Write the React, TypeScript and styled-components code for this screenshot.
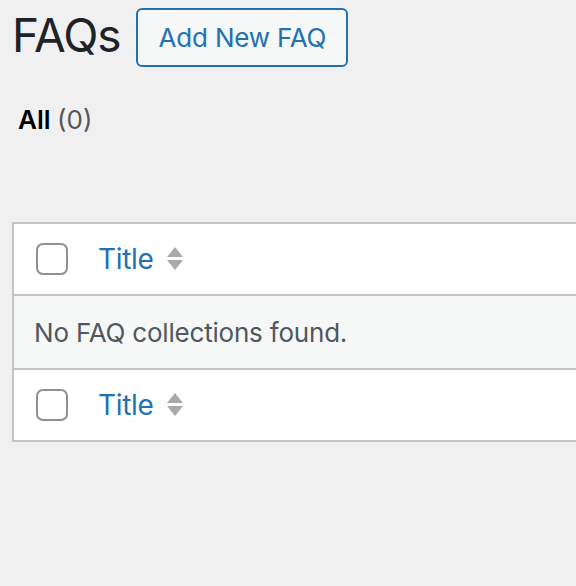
import React from 'react';
import styled, { createGlobalStyle } from 'styled-components';

const GlobalStyle = createGlobalStyle`
    html, body {
        margin: 0;
        padding: 0;
        background: #f0f0f1;
        overflow: hidden;
    }
    body {
        font-family: Inter, "Liberation Sans", sans-serif;
        color: #3c434a;
    }
`;

const Wrap = styled.div`
    padding: 8px 0 0 12px;
`;

const HeaderBar = styled.div`
    display: flex;
    align-items: flex-start;
    height: 59px;
`;

const Heading = styled.h1`
    margin: 4px 15px 0 0;
    font-size: 46px;
    font-weight: 400;
    line-height: 1;
    letter-spacing: -1px;
    color: #1d2327;
`;

const AddButton = styled.a`
    display: inline-flex;
    align-items: center;
    box-sizing: border-box;
    height: 59px;
    padding: 0 20px 0 21px;
    border: 2px solid #2271b1;
    border-radius: 6px;
    background: #f6f7f7;
    color: #2271b1;
    font-size: 26px;
    letter-spacing: -0.2px;
    text-decoration: none;
    cursor: pointer;
`;

const Subsub = styled.ul`
    list-style: none;
    margin: 34px 0 0 6px;
    padding: 0;
    font-size: 26px;
    line-height: 38px;
`;

const FilterLink = styled.li<{ current?: boolean }>`
    color: ${(p) => (p.current ? '#000' : '#2271b1')};
    font-weight: ${(p) => (p.current ? 600 : 400)};
`;

const Count = styled.span`
    color: #50575e;
    font-weight: 400;
`;

const Table = styled.div`
    margin-top: 83px;
    width: 640px;
    background: #fff;
    border: 2px solid #c3c4c7;
`;

const Row = styled.div<{ muted?: boolean; divider?: 'top' | 'bottom' }>`
    display: flex;
    align-items: center;
    box-sizing: border-box;
    height: 72px;
    padding-left: ${(p) => (p.muted ? '20px' : '22px')};
    background: ${(p) => (p.muted ? '#f6f7f7' : '#fff')};
    border-top: ${(p) => (p.divider === 'top' ? '2px solid #c3c4c7' : 'none')};
    border-bottom: ${(p) => (p.divider === 'bottom' ? '2px solid #c3c4c7' : 'none')};
`;

const Check = styled.span`
    display: inline-block;
    box-sizing: border-box;
    width: 32px;
    height: 32px;
    border: 2px solid #8c8f94;
    border-radius: 7px;
    background: #fff;
    margin-right: 30px;
`;

const SortLink = styled.a`
    display: inline-flex;
    align-items: center;
    color: #2271b1;
    font-size: 28px;
    letter-spacing: -0.3px;
    text-decoration: none;
    cursor: pointer;
`;

const SortIcon = styled.svg`
    margin-left: 12px;
    width: 18px;
    height: 24px;
`;

const Empty = styled.span`
    font-size: 26px;
    letter-spacing: -0.2px;
    color: #50575e;
`;

function ColumnHeader() {
    return (
        <>
            <Check />
            <SortLink>
                Title
                <SortIcon viewBox="0 0 18 24">
                    <path d="M9 0 L17 10 L1 10 Z" fill="#a7aaad" />
                    <path d="M1 13 L17 13 L9 23 Z" fill="#a7aaad" />
                </SortIcon>
            </SortLink>
        </>
    );
}

export default function App() {
    return (
        <Wrap>
            <GlobalStyle />
            <HeaderBar>
                <Heading>FAQs</Heading>
                <AddButton>Add New FAQ</AddButton>
            </HeaderBar>
            <Subsub>
                <FilterLink current>
                    All <Count>(0)</Count>
                </FilterLink>
            </Subsub>
            <Table>
                <Row divider="bottom">
                    <ColumnHeader />
                </Row>
                <Row muted>
                    <Empty>No FAQ collections found.</Empty>
                </Row>
                <Row divider="top">
                    <ColumnHeader />
                </Row>
            </Table>
        </Wrap>
    );
}
